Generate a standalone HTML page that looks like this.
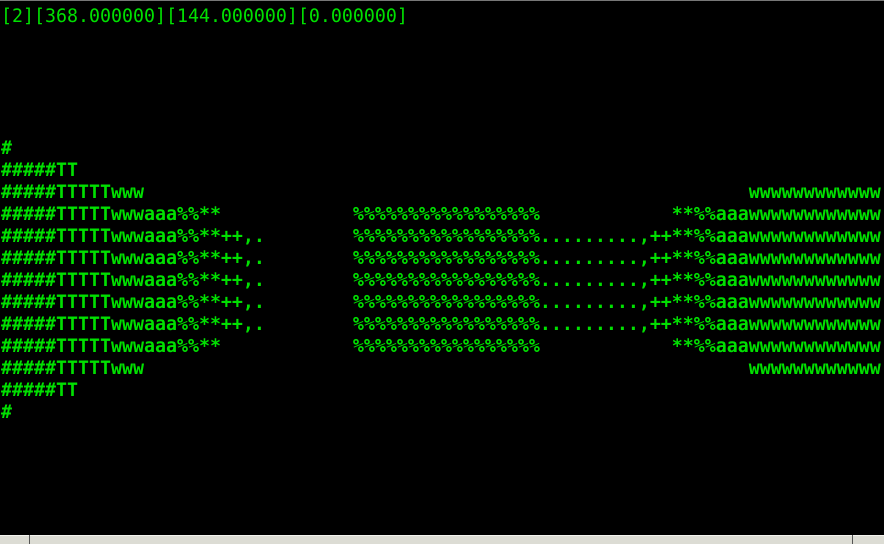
<!DOCTYPE html>
<html><head><style>
html,body{margin:0;padding:0;background:#000;width:884px;height:544px;overflow:hidden;position:relative}
.t{position:absolute;left:0;top:0;border-top:1px solid #777;width:884px;height:543px}
pre{margin:0;padding:5px 0 0 1px;font-family:"DejaVu Sans Mono","Liberation Mono",monospace;font-size:18.27px;line-height:22px;color:#00e000;white-space:pre}
b{font-weight:bold}
.sb{position:absolute;left:0;top:535px;width:884px;height:9px;background:#dcdcd4;border-top:1px solid #f4f4f0;box-sizing:border-box}
.d{position:absolute;top:535px;width:1px;height:9px;background:#555}
</style></head><body>
<div class="t"><pre>[2][368.000000][144.000000][0.000000]
<b>




#
#####TT
#####TTTTTwww                                                       wwwwwwwwwwww
#####TTTTTwwwaaa%%**            %%%%%%%%%%%%%%%%%            **%%aaawwwwwwwwwwww
#####TTTTTwwwaaa%%**++,.        %%%%%%%%%%%%%%%%%.........,++**%%aaawwwwwwwwwwww
#####TTTTTwwwaaa%%**++,.        %%%%%%%%%%%%%%%%%.........,++**%%aaawwwwwwwwwwww
#####TTTTTwwwaaa%%**++,.        %%%%%%%%%%%%%%%%%.........,++**%%aaawwwwwwwwwwww
#####TTTTTwwwaaa%%**++,.        %%%%%%%%%%%%%%%%%.........,++**%%aaawwwwwwwwwwww
#####TTTTTwwwaaa%%**++,.        %%%%%%%%%%%%%%%%%.........,++**%%aaawwwwwwwwwwww
#####TTTTTwwwaaa%%**            %%%%%%%%%%%%%%%%%            **%%aaawwwwwwwwwwww
#####TTTTTwww                                                       wwwwwwwwwwww
#####TT
#</b></pre></div>
<div class="sb"></div>
<div class="d" style="left:29px"></div>
<div class="d" style="left:852px"></div>
</body></html>
